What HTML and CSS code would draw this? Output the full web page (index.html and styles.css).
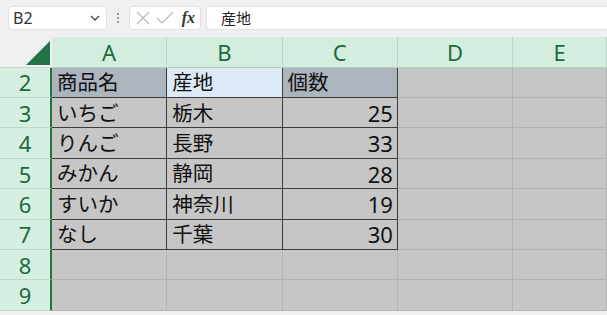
FILE: index.html
```html
<!DOCTYPE html>
<html lang="ja">
<head>
    <meta charset="UTF-8">
    <title>Book1 - Excel</title>
    <link rel="stylesheet" href="styles.css">
</head>
<body>
    <div class="toolbar">
        <div class="namebox">
            <span>B2</span>
            <svg class="chevron" viewBox="0 0 10 6" width="10" height="6">
                <path d="M1 1l4 4 4-4" fill="none" stroke="#444" stroke-width="1.3"/>
            </svg>
        </div>
        <div class="grip"><i></i><i></i><i></i></div>
        <div class="fxbox">
            <svg viewBox="0 0 14 14" width="14" height="14">
                <path d="M1 1l12 12M13 1L1 13" stroke="#b8b8b8" stroke-width="1.2"/>
            </svg>
            <svg viewBox="0 0 18 14" width="18" height="14">
                <path d="M1 7l5 5L17 1" fill="none" stroke="#b8b8b8" stroke-width="1.2"/>
            </svg>
            <span class="fx">fx</span>
        </div>
        <div class="formula">産地</div>
    </div>

    <div class="sheet">
        <div class="corner"><span class="tri"></span></div>
        <div class="colhead">A</div>
        <div class="colhead">B</div>
        <div class="colhead">C</div>
        <div class="colhead">D</div>
        <div class="colhead">E</div>

        <div class="rowhead">2</div>
        <div class="cell t head">商品名</div>
        <div class="cell t active">産地</div>
        <div class="cell t head">個数</div>
        <div class="cell"></div>
        <div class="cell"></div>

        <div class="rowhead">3</div>
        <div class="cell t">いちご</div>
        <div class="cell t">栃木</div>
        <div class="cell t num">25</div>
        <div class="cell"></div>
        <div class="cell"></div>

        <div class="rowhead">4</div>
        <div class="cell t">りんご</div>
        <div class="cell t">長野</div>
        <div class="cell t num">33</div>
        <div class="cell"></div>
        <div class="cell"></div>

        <div class="rowhead">5</div>
        <div class="cell t">みかん</div>
        <div class="cell t">静岡</div>
        <div class="cell t num">28</div>
        <div class="cell"></div>
        <div class="cell"></div>

        <div class="rowhead">6</div>
        <div class="cell t">すいか</div>
        <div class="cell t">神奈川</div>
        <div class="cell t num">19</div>
        <div class="cell"></div>
        <div class="cell"></div>

        <div class="rowhead">7</div>
        <div class="cell t">なし</div>
        <div class="cell t">千葉</div>
        <div class="cell t num">30</div>
        <div class="cell"></div>
        <div class="cell"></div>

        <div class="rowhead">8</div>
        <div class="cell"></div>
        <div class="cell"></div>
        <div class="cell"></div>
        <div class="cell"></div>
        <div class="cell"></div>

        <div class="rowhead">9</div>
        <div class="cell"></div>
        <div class="cell"></div>
        <div class="cell"></div>
        <div class="cell"></div>
        <div class="cell"></div>
    </div>
</body>
</html>
```

FILE: styles.css
```css
* {
    margin: 0;
    padding: 0;
    box-sizing: border-box;
}

body {
    width: 607px;
    height: 315px;
    overflow: hidden;
    background: #f0f0f0;
    font-family: 'Noto Sans', 'Noto Sans CJK JP', sans-serif;
    color: #111;
}

/* formula bar */
.toolbar {
    height: 37px;
    display: flex;
    align-items: flex-start;
    padding-top: 6px;
    padding-left: 8px;
}

.namebox {
    width: 99px;
    height: 24px;
    background: #fff;
    border: 1px solid #e2e2e2;
    border-radius: 4px;
    display: flex;
    align-items: center;
    justify-content: space-between;
    padding: 0 6px 0 4px;
    font-size: 16px;
    color: #333;
}

.grip {
    width: 22px;
    height: 24px;
    display: flex;
    flex-direction: column;
    align-items: center;
    justify-content: center;
    gap: 2px;
}

.grip i {
    width: 2px;
    height: 2px;
    background: #9a9a9a;
}

.fxbox {
    width: 72px;
    height: 24px;
    background: #fff;
    border: 1px solid #e2e2e2;
    border-radius: 4px;
    display: flex;
    align-items: center;
    padding: 0 5px 0 6px;
    gap: 6px;
}

.fx {
    margin-left: auto;
    font-family: 'Liberation Serif', serif;
    font-style: italic;
    font-weight: bold;
    font-size: 16px;
    color: #333;
}

.formula {
    flex: 1;
    height: 24px;
    margin-left: 5px;
    background: #fff;
    border-top: 1px solid #e2e2e2;
    border-bottom: 1px solid #e2e2e2;
    border-left: 1px solid #e2e2e2;
    border-radius: 4px 0 0 4px;
    padding-left: 14px;
    font-size: 15px;
    line-height: 22px;
    color: #222;
}

/* grid */
.sheet {
    display: grid;
    grid-template-columns: 52px repeat(4, 115.3px) 1fr;
    grid-template-rows: 30.7px repeat(8, 30.4px);
}

.corner {
    background: #f0f0f0;
    position: relative;
    border-bottom: 1px solid #d0d0d0;
}

.tri {
    position: absolute;
    right: 2px;
    bottom: 2px;
    width: 0;
    height: 0;
    border-left: 24px solid transparent;
    border-bottom: 24px solid #217346;
}

.colhead {
    background: #d3eedf;
    border-right: 1px solid #bcd8c6;
    border-bottom: 1px solid #b2cfbd;
    color: #1e6a3d;
    font-size: 22px;
    display: flex;
    align-items: center;
    justify-content: center;
}

.rowhead {
    background: #d5f0e1;
    border-right: 2px solid #217346;
    border-bottom: 1px solid #bfd9c8;
    color: #1e6a3d;
    font-size: 22px;
    display: flex;
    align-items: center;
    justify-content: center;
}

.cell {
    background: #c6c6c6;
    border-right: 1px solid #b3b3b3;
    border-bottom: 1px solid #b3b3b3;
    font-size: 20.5px;
    line-height: 1;
    display: flex;
    align-items: center;
    padding-left: 5px;
    white-space: nowrap;
}

.cell.t {
    border-right-color: #3c3c3c;
    border-bottom-color: #3c3c3c;
}

.cell.head {
    background: #acb4be;
}

.cell.active {
    background: #dce9f7;
}

.cell.num {
    justify-content: flex-end;
    padding-right: 4px;
    font-size: 22px;
}
```
